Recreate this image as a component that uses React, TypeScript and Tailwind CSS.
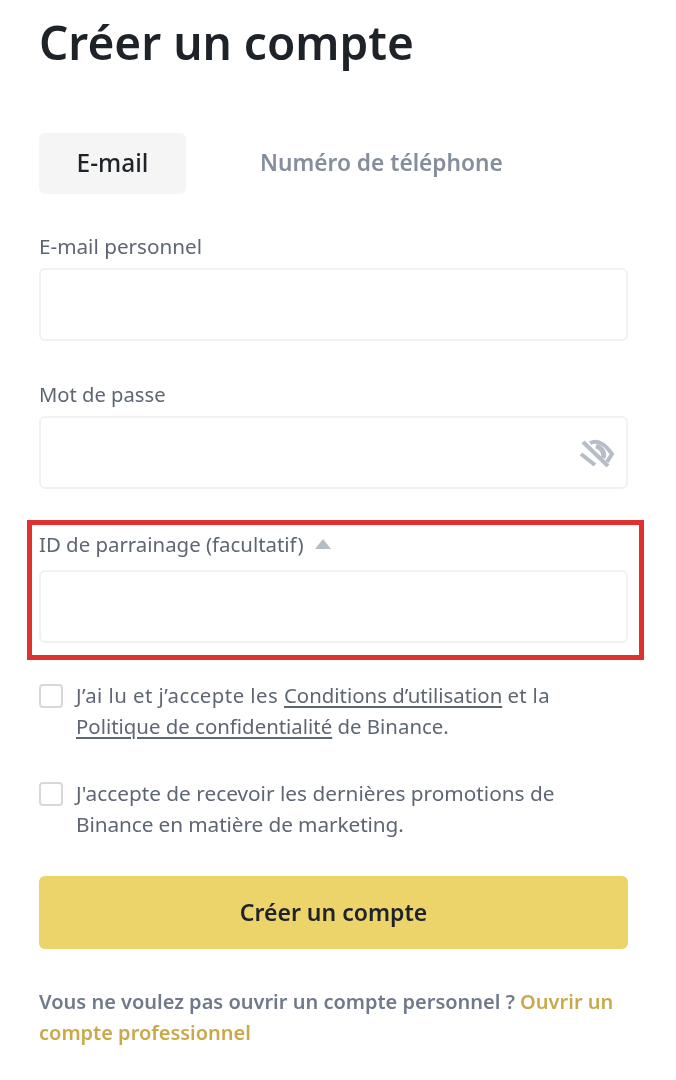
export default function App() {
  return (
    <div className="w-[676px] h-[1080px] overflow-hidden bg-white font-['Noto_Sans',sans-serif] text-[#1e2329] pl-[39px] pr-[48px] blur-[0.4px]">
      <h1 className="h-[133px] pt-[12px] text-[46px] leading-[60px] font-semibold whitespace-nowrap">Créer un compte</h1>
      <div className="flex items-center h-[61px] font-medium">
        <div className="w-[147px] h-[61px] rounded-[6px] bg-[#f5f5f5] flex items-center justify-center text-[24.5px]">E-mail</div>
        <div className="ml-[74px] text-[22.7px] font-semibold text-[#848e9c]">Numéro de téléphone</div>
      </div>
      <div className="mt-[37px] h-[30px] text-[20.7px] leading-[30px] text-[#5e6673]">E-mail personnel</div>
      <div className="mt-[7px] h-[73px] rounded-[6px] border-2 border-[#f0f1f2]" />
      <div className="mt-[38px] h-[30px] text-[20.2px] leading-[30px] text-[#5e6673]">Mot de passe</div>
      <div className="mt-[7px] h-[73px] rounded-[6px] border-2 border-[#f0f1f2] flex items-center justify-end pr-[12px]">
        <svg width="36" height="36" viewBox="0 0 36 36" fill="none" stroke="#b7bdc6" strokeWidth="4">
          <path d="M3 19 L17 30" />
          <path d="M5 7 L30 31" />
          <path d="M12 8 C20 4 28 10 34 19 L29 27" />
          <path d="M18 11 C24 13 27 18 25 23" strokeWidth="5" />
        </svg>
      </div>
      <div className="relative mt-[40px]">
        <div className="absolute left-[-12px] top-[-9px] w-[617px] h-[140px] border-[5px] border-[#e03131]" />
        <div className="h-[30px] flex items-center text-[20.4px] leading-[30px] text-[#5e6673]">
          ID de parrainage (facultatif)
          <svg className="ml-[11px]" width="16" height="10" viewBox="0 0 16 10"><path d="M8 0 L16 10 H0 Z" fill="#b7bdc6" /></svg>
        </div>
        <div className="mt-[11px] h-[73px] rounded-[6px] border-2 border-[#f0f1f2]" />
      </div>
      <div className="mt-[41px] flex gap-[13px] text-[20.4px] leading-[31px] text-[#5e6673]">
        <div className="w-[24px] h-[24px] shrink-0 rounded-[4px] border-2 border-[#d5d8dc]" />
        <p className="-mt-[4px] whitespace-nowrap"><span className="tracking-[0.45px]">J’ai lu et j’accepte les </span><span className="underline underline-offset-[3px]">Conditions d’utilisation</span> <span className="tracking-[0.3px]">et la</span><br /><span className="underline underline-offset-[3px]">Politique de confidentialité</span> de Binance.</p>
      </div>
      <div className="mt-[40px] flex gap-[13px] text-[20.8px] leading-[31px] text-[#5e6673]">
        <div className="w-[24px] h-[24px] shrink-0 rounded-[4px] border-2 border-[#d5d8dc]" />
        <p className="-mt-[4px] whitespace-nowrap">J'accepte de recevoir les dernières promotions de<br /><span className="tracking-[-0.1px]">Binance en matière de marketing.</span></p>
      </div>
      <button className="mt-[36px] w-full h-[73px] rounded-[6px] bg-[#ecd46a] text-[23px] font-semibold text-[#1e2329]">Créer un compte</button>
      <p className="mt-[37px] text-[20px] leading-[31px] font-semibold text-[#707a8a] whitespace-nowrap">
        Vous ne voulez pas ouvrir un compte personnel ? <span className="text-[#c9a94a]">Ouvrir un<br />compte professionnel</span>
      </p>
    </div>
  );
}
